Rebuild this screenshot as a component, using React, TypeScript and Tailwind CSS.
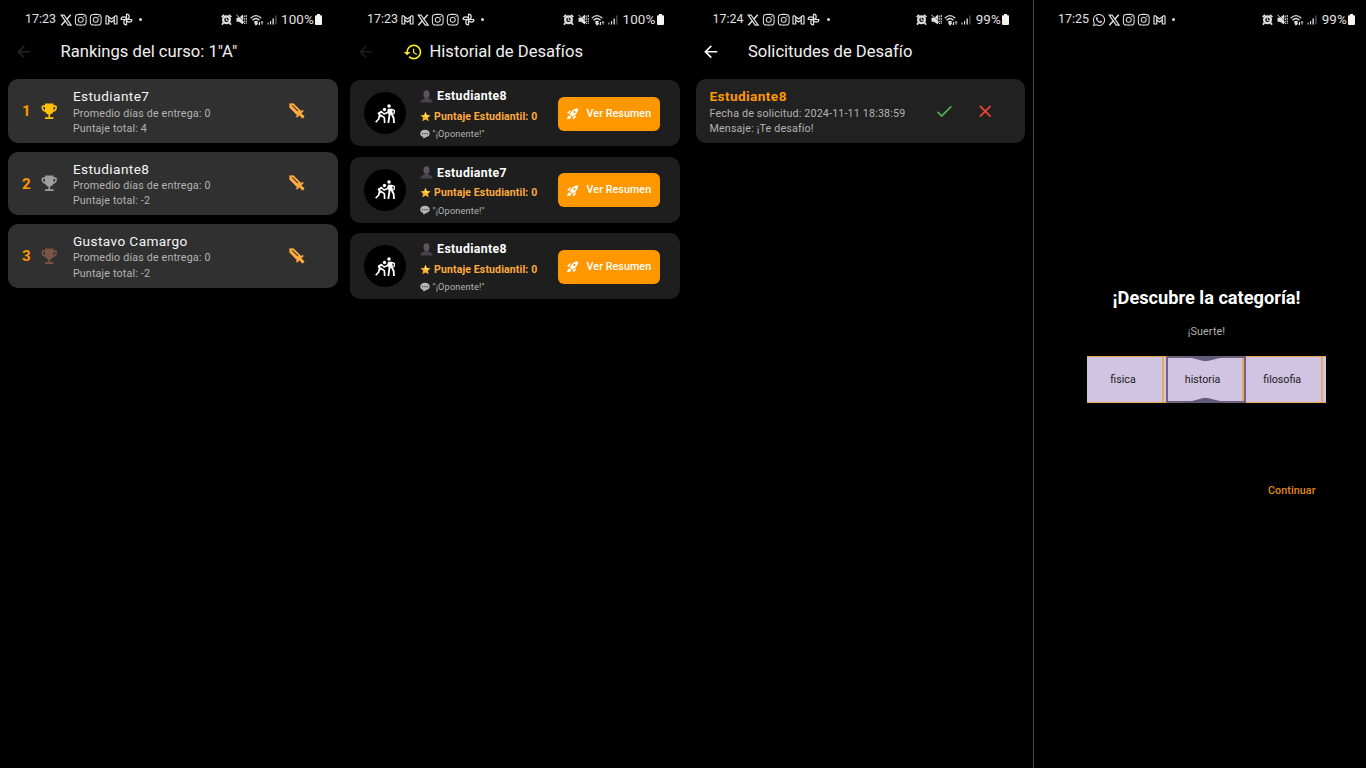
import React from "react";
import {
  MdArrowBack,
  MdCheck,
  MdClose,
  MdEmojiEvents,
  MdHistory,
  MdRocketLaunch,
} from "react-icons/md";
import { FaInstagram, FaWhatsapp } from "react-icons/fa";

type AppName = "x" | "ig" | "gmail" | "fan" | "wa";

function AppIcon({ name }: { name: AppName }) {
  if (name === "ig") return <FaInstagram size={13.5} />;
  if (name === "wa") return <FaWhatsapp size={14} />;
  if (name === "x")
    return (
      <svg width="12" height="12" viewBox="0 0 24 24" fill="none" stroke="currentColor" strokeWidth="2.500">
        <path d="M2.500 2h5.500L22 22h-5.500z" />
        <path d="M21.500 1.500l-8.500 9.500M10.800 13.500L2.500 22.500" strokeWidth="3" />
      </svg>
    );
  if (name === "gmail")
    return (
      <svg width="13" height="12" viewBox="0 0 26 24" fill="none" stroke="currentColor" strokeWidth="2.400" strokeLinejoin="round">
        <path d="M2 5.500Q2 3 4.500 3.500L13 10l8.500-6.500Q24 3 24 5.500V20h-5.500v-8L13 16.200 7.500 12v8H2z" />
        <path d="M7.500 6v6M18.500 6v6" />
      </svg>
    );
  return (
    <svg width="13" height="13" viewBox="0 0 24 24" fill="none" stroke="currentColor" strokeWidth="2.200" strokeLinejoin="round">
      <path d="M12 12V2a5 5 0 0 1 0 10zM12 12h10a5 5 0 0 1-10 0zM12 12v10a5 5 0 0 1 0-10zM12 12H2a5 5 0 0 1 10 0z" />
    </svg>
  );
}

function SystemIcons() {
  return (
    <>
      <span className="flex w-[15px] justify-center">
        <svg width="11" height="11" viewBox="0 0 22 22">
          <path d="M0 5L5 .5 7.500 2.500 2.500 7zM22 5l-5-4.500-2.500 2L19.500 7z" fill="currentColor" />
          <circle cx="11" cy="11.500" r="9" fill="currentColor" />
          <path d="M5 17l-3 4.500M17 17l3 4.500" stroke="currentColor" strokeWidth="3.500" />
          <circle cx="11" cy="11.500" r="4.500" fill="#000" />
          <path d="M10.500 7v5.500H15" stroke="currentColor" strokeWidth="2.200" fill="none" />
        </svg>
      </span>
      <span className="flex w-[15px] justify-center">
        <svg width="11" height="11" viewBox="0 0 22 22">
          <path d="M1 7.500h5L14 1v20l-8-5.500H1z" fill="currentColor" />
          <path d="M3 1.500l17 18" stroke="#000" strokeWidth="1.200" />
          <path d="M1 1.500l17 18.500" stroke="currentColor" strokeWidth="2" />
          <path d="M16.500 3v13M20.500 2v18" stroke="currentColor" strokeWidth="2.200" strokeDasharray="4 1.500" />
        </svg>
      </span>
      <span className="flex w-[15px] justify-center">
        <svg width="14" height="12" viewBox="0 0 28 24" fill="none" stroke="currentColor" strokeWidth="2.400">
          <path d="M1.500 8.500Q12-2 22.500 8.500M5 12.500Q12 5.500 19 12.500M8.500 16.500q3.500-3.500 7 0" />
          <path d="M10 18.500l2-2 2.500 2.500-2.500 2.500z" fill="currentColor" />
          <path d="M19 22v-6M17 19.500l2 2.500M24 15v6M22 17l2-2 2 2" strokeWidth="2" />
        </svg>
      </span>
      <span className="flex w-[15px] justify-center">
        <svg width="10" height="10" viewBox="0 0 20 20" fill="currentColor">
          <path d="M1 15h2v4H1zM6 12h2.200v7H6zM11 7h2.700v12H11z" />
          <path d="M16.500 1H19v18h-2.500z" opacity=".4" />
        </svg>
      </span>
    </>
  );
}

function StatusBar({ time, apps, battery }: { time: string; apps: AppName[]; battery: string }) {
  return (
    <div className="flex h-[39px] shrink-0 items-center justify-between text-[#e0e0e0]">
      <div className="flex items-center">
        <span className="w-[33px] whitespace-nowrap text-[12.4px] leading-none">{time}</span>
        {apps.map((a, i) => (
          <span key={i} className="flex w-[15.200px] justify-center">
            <AppIcon name={a} />
          </span>
        ))}
        <span className="ml-[5.500px] h-[3px] w-[3px] rounded-full bg-current" />
      </div>
      <div className="flex items-center">
        <SystemIcons />
        <span className="ml-[2px] text-[13.400px] leading-none tracking-[0.150px]">{battery}</span>
        <svg className="ml-px" width="7" height="11" viewBox="0 0 7 11" fill="#f4f4f4">
          <path d="M2 0h3v1.200h1.200q.8 0 .8.800V10q0 1-1 1H1q-1 0-1-1V2q0-.8.800-.8H2z" />
        </svg>
      </div>
    </div>
  );
}

function Sword() {
  return (
    <svg width="20.400" height="20.400" viewBox="0 0 24 24" fill="#ffab40" stroke="#ffab40" strokeWidth=".4">
      <path
        fillRule="evenodd"
        d="M7 4.900H4.900l7.500 7.500 1.100-1zM19.960 19.120l-.840.840a.996.996 0 0 1-1.410 0l-3.120-3.120-2.680 2.660-1.410-1.410 1.420-1.420L3 7.750V3h4.750l8.920 8.920 1.420-1.420 1.410 1.410-2.670 2.670 3.120 3.120c.4.400.4 1.030.010 1.420z"
      />
    </svg>
  );
}

function Wrestlers() {
  return (
    <svg width="20.700" height="19.300" viewBox="59 70 62 58" fill="none" stroke="currentColor" strokeLinejoin="round">
      <circle cx="101" cy="76" r="5.500" fill="currentColor" stroke="none" />
      <circle cx="87.500" cy="86.500" r="5" fill="currentColor" stroke="none" />
      <path d="M98 84h12l3 18H100l-4-10z" fill="currentColor" stroke="none" />
      <path d="M109 86l9 4-3 11" strokeWidth="4" />
      <path d="M103 100l-4 27M109 100l6 12 1 15" strokeWidth="5.500" />
      <path d="M80 92l-10 6 6 11" strokeWidth="6" />
      <path d="M78 93l8 7 13-5" strokeWidth="4.500" />
      <path d="M75 103l12 8 1 16M72 106l-2 9-9 10" strokeWidth="5" />
    </svg>
  );
}

const RANKS = [
  { n: 1, name: "Estudiante7", pts: "4", cup: "text-[#ffc107]" },
  { n: 2, name: "Estudiante8", pts: "-2", cup: "text-[#9e9e9e]" },
  { n: 3, name: "Gustavo Camargo", pts: "-2", cup: "text-[#795548]" },
];

function RankCard({ n, name, pts, cup }: (typeof RANKS)[number]) {
  return (
    <div className="flex h-[63.500px] items-center rounded-[10px] bg-[#303030] pl-[13.500px]">
      <span className="w-[17.500px] pt-px text-[15px] font-bold text-[#ff9800]">{n}</span>
      <MdEmojiEvents size={20.5} className={cup} />
      <div className="ml-[13px] w-[214px] pt-[1.400px] text-[10.700px] leading-[15.300px] tracking-[0.170px] text-[#b3b3b3]">
        <div className="text-[13.600px] leading-[18.200px] tracking-[0.420px] text-[#f5f5f5]">{name}</div>
        <div>Promedio días de entrega: 0</div>
        <div>Puntaje total: {pts}</div>
      </div>
      <Sword />
    </div>
  );
}

function PersonGlyph() {
  return (
    <svg width="13" height="13" viewBox="0 0 26 26">
      <path d="M1 25q0-6 6-7 3-.6 3-3h6q0 2.400 3 3 6 1 6 7z" fill="#46424d" />
      <ellipse cx="13" cy="8.500" rx="6" ry="8" fill="#5b5562" />
      <path d="M10 14h6v4q-3 3-6 0z" fill="#4d4855" />
    </svg>
  );
}

function StarGlyph() {
  return (
    <svg width="11" height="11" viewBox="0 0 24 24">
      <path d="M12 1l3.200 7.500 8 .7-6 5.300 1.800 8-7-4.200-7 4.200 1.800-8-6-5.300 8-.7z" fill="#fdb52c" />
      <path d="M12 3l2.200 6.500 6 .7-5 3.300-5.200-3z" fill="#ffe36b" />
    </svg>
  );
}

function BalloonGlyph() {
  return (
    <svg width="10" height="10" viewBox="0 0 20 20">
      <path d="M10 1.500c5.500 0 9.500 3 9.500 7.500s-4 7-8 7.300L7 19.500l-.5-3.600C2.500 15 .5 12.500.5 9c0-4.500 4-7.500 9.500-7.500z" fill="#b9b4bb" />
      <path d="M4 8h2.500v2.500H4zM8.800 8h2.500v2.500H8.800zM13.500 8H16v2.500h-2.500z" fill="#4a464c" />
    </svg>
  );
}

function ChallengeCard({ name }: { name: string }) {
  return (
    <div className="flex h-[66.200px] items-center rounded-[10px] bg-[#1e1e1e] pl-[13.200px]">
      <div className="flex h-[42px] w-[42px] shrink-0 items-center justify-center rounded-full bg-black pl-px text-white">
        <Wrestlers />
      </div>
      <div className="ml-[14px] flex w-[138px] shrink-0 flex-col pt-[3.200px] whitespace-nowrap">
        <div className="flex h-[17px] items-center gap-[4.500px] text-[12.300px] font-bold tracking-[0.380px] text-white">
          <PersonGlyph />
          {name}
        </div>
        <div className="mt-[3px] flex h-[17px] items-center gap-[3.500px] text-[10.500px] font-bold tracking-[0.130px] text-[#ffab40]">
          <StarGlyph />
          Puntaje Estudiantil: 0
        </div>
        <div className="mt-px flex h-[16px] items-center gap-[3px] text-[9.200px] tracking-[0.170px] text-[#b3b3b3]">
          <BalloonGlyph />
          "¡Oponente!"
        </div>
      </div>
      <button className="mt-px flex h-[34px] w-[102px] items-center rounded-[6px] bg-[#ff9800] pl-[8.500px] text-[10.700px] font-medium tracking-[0.080px] whitespace-nowrap text-white">
        <MdRocketLaunch size={13.5} className="mr-[7px]" />
        Ver Resumen
      </button>
    </div>
  );
}

function Roulette() {
  const cells = ["fisica", "historia", "filosofia"];
  return (
    <div className="relative mt-[16px] flex h-[47px] w-[239px] border-y border-[#e8a04f] bg-[#d0c4e2] text-[10.700px] text-[#1d1b20]">
      {cells.map((c) => (
        <div key={c} className="flex w-[79.600px] items-center">
          <span className="w-[72px] pt-px text-center">{c}</span>
          <span className="ml-[3px] h-full w-[2px] bg-[#eba95f]" />
        </div>
      ))}
      <svg className="absolute -top-px left-[79px]" width="80" height="47" viewBox="0 0 80 47">
        <rect x="1" y="1" width="78" height="45" fill="none" stroke="#645b78" strokeWidth="1.800" />
        <path d="M20 0h40v1.200l-5 .6L41.500 5h-4L25 1.800l-5-.6zM20 47h40v-1.200l-5-.6L41.500 42h-4L25 45.200l-5 .6z" fill="#645b78" />
      </svg>
    </div>
  );
}

export default function App() {
  return (
    <main className="flex h-[768px] w-[1366px] overflow-hidden bg-black font-[Roboto,'Liberation_Sans',sans-serif]">
      <section className="flex w-[342px] shrink-0 flex-col">
        <div className="pr-[20px] pl-[25px]">
          <StatusBar time="17:23" apps={["x", "ig", "ig", "gmail", "fan"]} battery="100%" />
        </div>
        <header className="flex h-[26px] items-center pl-[14px]">
          <MdArrowBack size={19.5} className="text-[#222]" />
          <h1 className="ml-[27px] text-[16.600px] text-[#f0f0f0]">Rankings del curso: 1"A"</h1>
        </header>
        <div className="mt-[14.400px] ml-[8.400px] flex w-[329.200px] flex-col gap-[8.900px]">
          {RANKS.map((r) => (
            <RankCard key={r.n} {...r} />
          ))}
        </div>
      </section>

      <section className="flex w-[346px] shrink-0 flex-col">
        <div className="pr-[24.500px] pl-[25px]">
          <StatusBar time="17:23" apps={["gmail", "x", "ig", "ig", "fan"]} battery="100%" />
        </div>
        <header className="flex h-[26px] items-center pl-[14px]">
          <MdArrowBack size={19.5} className="text-[#1c1c1c]" />
          <MdHistory size={20} className="ml-[27px] text-[#f5ee1e]" />
          <h1 className="ml-[7px] text-[16.600px] text-[#f0f0f0]">Historial de Desafíos</h1>
        </header>
        <div className="mt-[15.300px] ml-[8.400px] flex w-[329.200px] flex-col gap-[10.300px]">
          <ChallengeCard name="Estudiante8" />
          <ChallengeCard name="Estudiante7" />
          <ChallengeCard name="Estudiante8" />
        </div>
      </section>

      <section className="flex w-[346px] shrink-0 flex-col border-r border-[#4a4a4a]">
        <div className="pr-[24px] pl-[24.500px]">
          <StatusBar time="17:24" apps={["x", "ig", "ig", "gmail", "fan"]} battery="99%" />
        </div>
        <header className="flex h-[26px] items-center pl-[13px]">
          <MdArrowBack size={19.5} className="text-white" />
          <h1 className="ml-[27.500px] text-[16.600px] text-[#f0f0f0]">Solicitudes de Desafío</h1>
        </header>
        <div className="mt-[14.400px] ml-[8px] flex h-[63.500px] w-[329.200px] items-center rounded-[10px] bg-[#212121] pl-[13.500px]">
          <div className="w-[224.500px] pt-[1.500px] text-[10.700px] leading-[15.300px] tracking-[0.170px] whitespace-nowrap text-[#b3b3b3]">
            <div className="text-[13.600px] leading-[18.500px] font-bold tracking-[0.420px] text-[#ff9800]">Estudiante8</div>
            <div>Fecha de solicitud: 2024-11-11 18:38:59</div>
            <div>Mensaje: ¡Te desafío!</div>
          </div>
          <MdCheck size={20.5} className="text-[#4caf50]" />
          <MdClose size={20.5} className="ml-[20px] text-[#f44336]" />
        </div>
      </section>

      <section className="flex flex-1 flex-col">
        <div className="pr-[11px] pl-[24px]">
          <StatusBar time="17:25" apps={["wa", "x", "ig", "ig", "gmail"]} battery="99%" />
        </div>
        <div className="mt-[247px] ml-[53px] flex w-[239px] flex-col items-center">
          <h2 className="text-[18.200px] leading-[24px] font-bold whitespace-nowrap text-white">¡Descubre la categoría!</h2>
          <p className="mt-[14px] text-[10.700px] leading-[16px] tracking-[0.160px] text-[#b3b3b3]">¡Suerte!</p>
          <Roulette />
          <button className="mt-[80px] mr-[10.500px] self-end text-[10.700px] leading-[16px] font-medium tracking-[0.080px] text-[#e08a1e]">
            Continuar
          </button>
        </div>
      </section>
    </main>
  );
}
